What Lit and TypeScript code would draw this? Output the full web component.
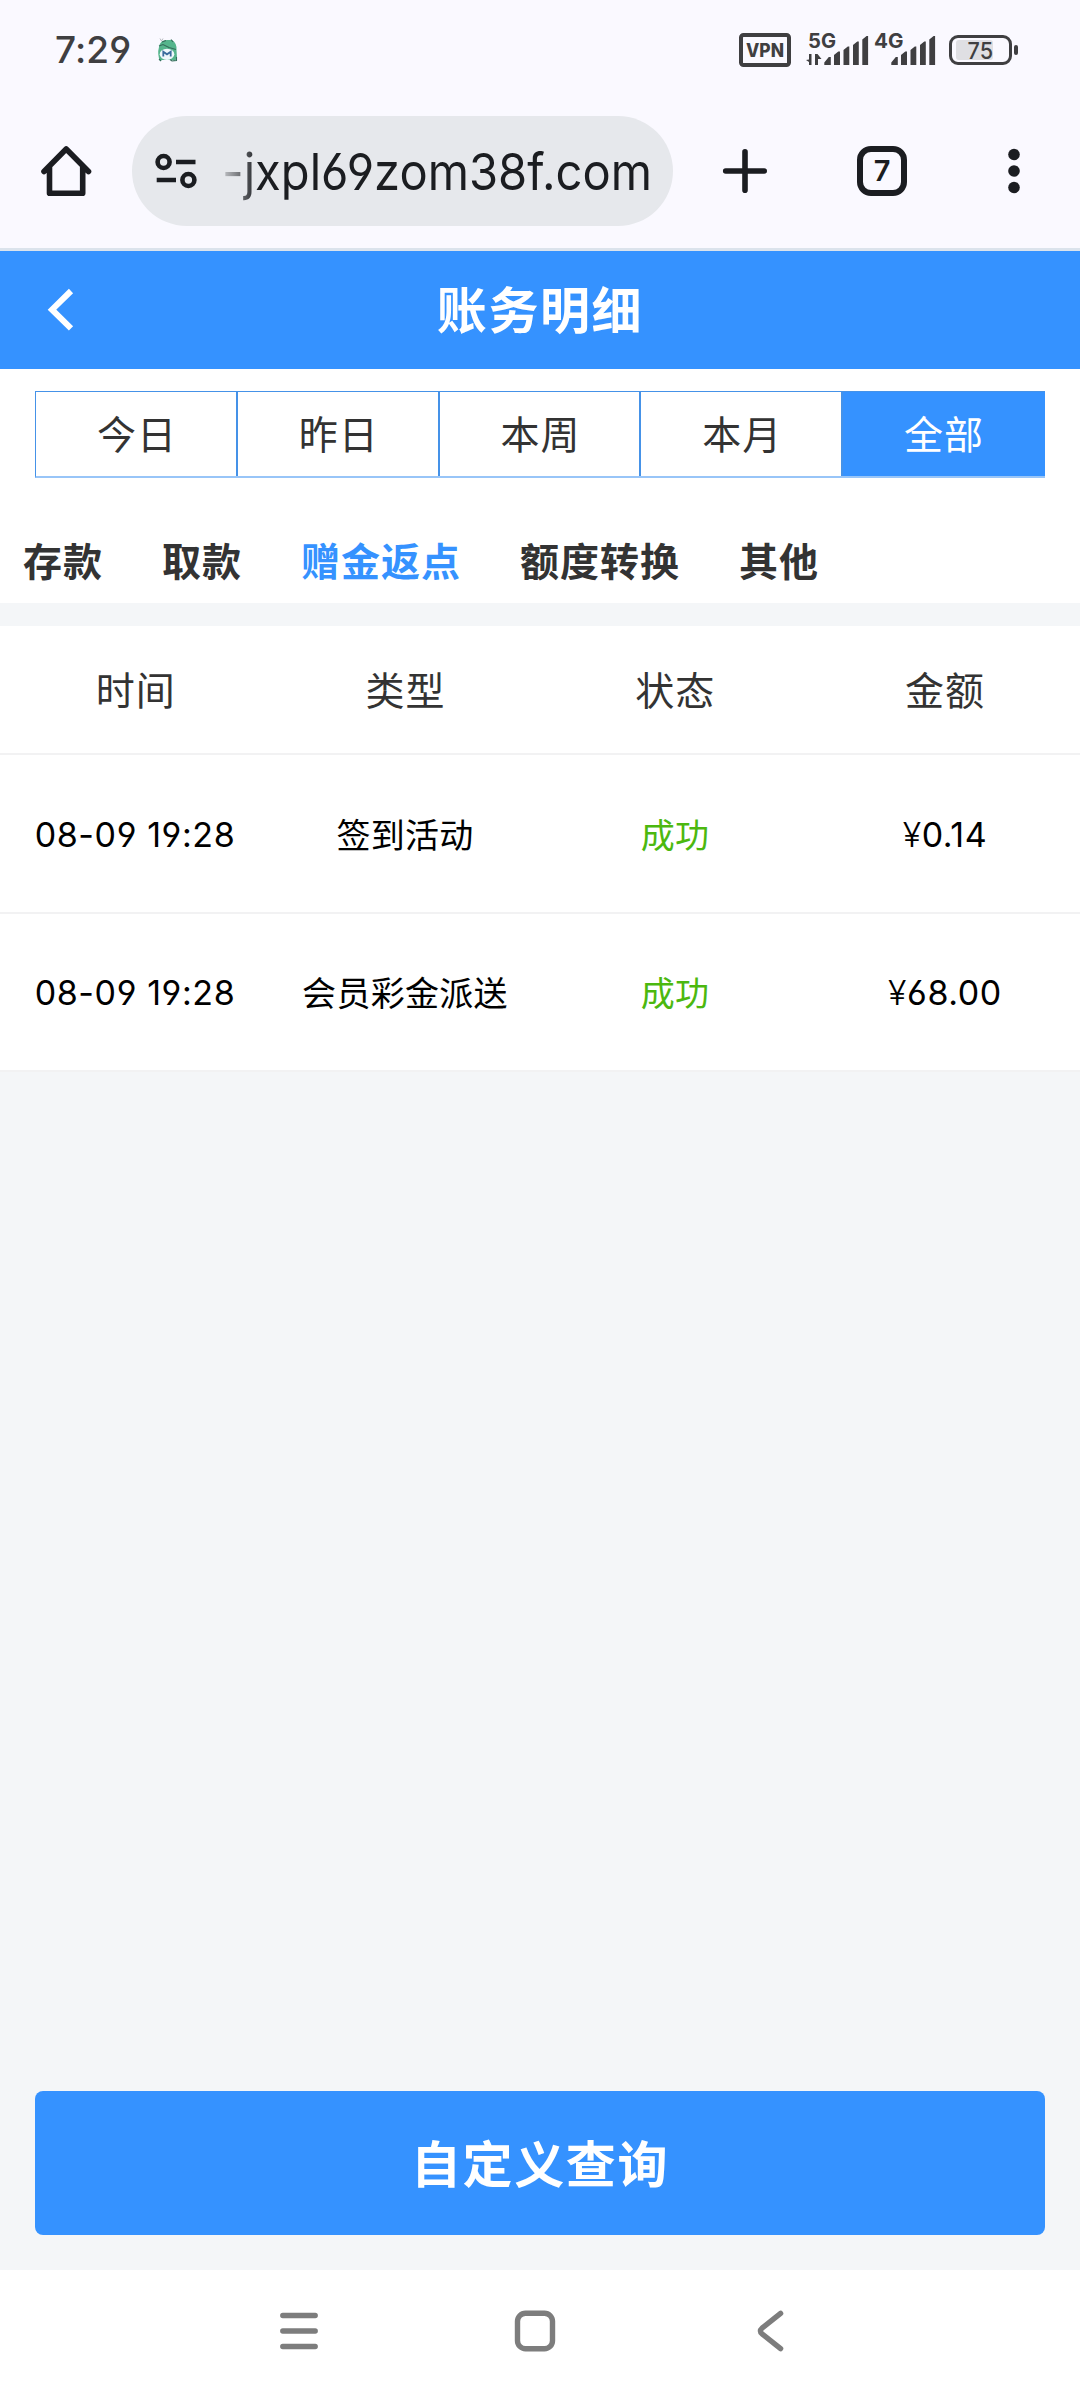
import { LitElement, html, css, svg } from "lit";
import { customElement, property } from "lit/decorators.js";
import { classMap } from "lit/directives/class-map.js";

const signalBars = (x: number) => svg`
  <path transform="translate(${x} 0)" d="M0 65V62.5L4.5 57H6.5V65ZM9.7 65V55L14 51.5H15.7V65ZM19.2 65V50L23.5 46.5H25V65ZM28.7 65V45L33 41.5H34.5V65ZM38 65V39.5L42.3 36H43.8V65Z" fill="#3f3f41"/>`;

@customElement("status-bar")
class StatusBar extends LitElement {
  static styles = css`
    :host { display: flex; height: 100px; align-items: flex-start; justify-content: space-between; padding: 0 60px 0 55px; color: #3f3f41; }
    .left { display: flex; align-items: center; gap: 25px; height: 100px; }
    .time { font: 500 37px/40px Inter, sans-serif; letter-spacing: 0.1px; font-feature-settings: "cv04"; }
    svg { display: block; }
    text { font-family: Inter, sans-serif; fill: #3f3f41; }
    .vpn { font-size: 18.5px; font-weight: 800; }
    .net { font-size: 20px; font-weight: 700; }
    .charge { font-size: 23.5px; font-weight: 500; }
  `;
  render() {
    return html`
      <div class="left">
        <span class="time">7:29</span>
        <svg width="22" height="26" viewBox="156 37 22 26">
          <path d="M159 47Q160 40 167 40H172Q177 43 176.5 50L177 58L175 61L172 60H162L160 61Q157 54 159 47Z" fill="#55b58c"/>
          <path d="M159 46L163 44.5L169 47.5L176 49.5M159 59L161 61M170 59.5L172 61L176.5 60.5V57M162 42L166 40.5M171 39.5L173 42" fill="none" stroke="#356d5b" stroke-width="1.1"/>
          <ellipse cx="167" cy="54.3" rx="7.3" ry="5.6" fill="#eef7fb"/>
          <path d="M163.3 56.5V51.7L167 54.3L170.7 51.7V56.5" fill="none" stroke="#3b6c9d" stroke-width="1.8"/>
          <path d="M160 38.5L161.5 41L163 38.5" fill="none" stroke="#b9bcc0" stroke-width="1"/>
        </svg>
      </div>
      <svg width="282" height="100" viewBox="738 0 282 100">
        <rect x="741" y="35" width="48" height="30" rx="2.5" fill="none" stroke="#3f3f41" stroke-width="4"/>
        <text class="vpn" x="746" y="56.8" textLength="38" lengthAdjust="spacingAndGlyphs">VPN</text>
        <text class="net" x="808" y="48" textLength="28" lengthAdjust="spacingAndGlyphs">5G</text>
        <path d="M811.5 54V65H809V62L806 60L809 59.5V54ZM815 65V54L817.5 54L821.5 59H818V65Z" fill="#3f3f41"/>
        ${signalBars(824.3)}
        <text class="net" x="874" y="48" textLength="29.5" lengthAdjust="spacingAndGlyphs">4G</text>
        ${signalBars(891.3)}
        <rect x="950.5" y="36.5" width="60" height="27" rx="7.5" fill="none" stroke="#3f3f41" stroke-width="3"/>
        <rect x="956" y="40" width="37" height="20" rx="3" fill="#dfdfe3"/>
        <text class="charge" x="967.5" y="59" textLength="25.5" lengthAdjust="spacingAndGlyphs">75</text>
        <rect x="1014" y="45" width="4" height="10" rx="2" fill="#3f3f41"/>
      </svg>`;
  }
}

@customElement("browser-bar")
class BrowserBar extends LitElement {
  static styles = css`
    :host { display: flex; align-items: center; box-sizing: border-box; height: 151px; padding: 0 56px 6px 36px; border-bottom: 3px solid #dbe3ec; color: #1b1d21; }
    svg { display: block; flex: none; overflow: visible; fill: none; stroke: #1b1d21; }
    .pill { display: flex; align-items: center; box-sizing: border-box; width: 541px; height: 110px; margin-left: 36px; padding-left: 20px; border-radius: 55px; background: #e6e8ec; }
    .url { font-family: Inter, sans-serif; font-size: 51px; font-weight: 400; stroke: none; fill: url(#fade); font-feature-settings: "cv03", "cv04"; }
    .plus { margin-left: 44px; }
    .tabs { display: flex; align-items: center; justify-content: center; box-sizing: border-box; width: 50px; height: 50px; margin-left: 84px; border: 6px solid #1b1d21; border-radius: 14px; font: 600 29px/38px Inter, sans-serif; }
    .more { margin-left: 101px; }
  `;
  render() {
    return html`
      <svg width="60" height="60" viewBox="36 141 60 60" stroke-width="5.6" stroke-linecap="round" stroke-linejoin="round">
        <path d="M44 171.5L66.2 149L88.5 171.5M49.5 167V193.2H82.7V167"/>
      </svg>
      <div class="pill">
        <svg width="514" height="110" viewBox="152 116 514 110" stroke-width="4.6">
          <defs>
            <linearGradient id="fade" gradientUnits="userSpaceOnUse" x1="215" y1="0" x2="258" y2="0">
              <stop offset="0" stop-color="#1b1d21" stop-opacity="0"/>
              <stop offset="1" stop-color="#1b1d21"/>
            </linearGradient>
          </defs>
          <circle cx="163.6" cy="162" r="6"/><path d="M176 162H195.5M156.7 180H176"/><circle cx="188.4" cy="180" r="6"/>
          <text class="url" x="222" y="190" textLength="430" lengthAdjust="spacingAndGlyphs">-jxpl69zom38f.com</text>
        </svg>
      </div>
      <svg class="plus" width="56" height="56" viewBox="717 143 56 56" stroke-width="5.6" stroke-linecap="round">
        <path d="M725.7 171H764.2M745 151.8V190.2"/>
      </svg>
      <div class="tabs">7</div>
      <svg class="more" width="12" height="50" viewBox="1008 146 12 50">
        <g fill="#1b1d21" stroke="none"><circle cx="1014" cy="154.5" r="5.8"/><circle cx="1014" cy="171" r="5.8"/><circle cx="1014" cy="187.5" r="5.8"/></g>
      </svg>`;
  }
}

interface Entry { time: string; type: string; status: string; amount: string }

@customElement("ledger-table")
class LedgerTable extends LitElement {
  @property({ attribute: false }) entries: Entry[] = [];
  static styles = css`
    :host { display: block; background: #fff; }
    .row { display: grid; grid-template-columns: repeat(4, 1fr); align-items: center; justify-items: center; box-sizing: border-box; height: 158.5px; padding-top: 1px; border-bottom: 2px solid #f2f2f3; color: #000; font-size: 34px; line-height: 50px; letter-spacing: 0.3px; }
    .head { height: 129px; padding: 0 0 4px 1px; color: #333; font-size: 39px; letter-spacing: 1px; }
    .num { padding-top: 2px; font-family: Inter, sans-serif; font-feature-settings: "cv03", "cv04"; letter-spacing: 0.6px; }
    .yen { font-weight: 300; }
    .ok { color: #4cb80f; }
  `;
  render() {
    return html`
      <div class="row head"><span>时间</span><span>类型</span><span>状态</span><span>金额</span></div>
      ${this.entries.map(e => html`
        <div class="row">
          <span class="num">${e.time}</span><span>${e.type}</span><span class="ok">${e.status}</span>
          <span class="num"><span class="yen">¥</span>${e.amount}</span>
        </div>`)}`;
  }
}

@customElement("app-root")
class AppRoot extends LitElement {
  static styles = css`
    :host { display: flex; flex-direction: column; box-sizing: border-box; width: 1080px; height: 2400px; overflow: hidden; background: #f4f6f8; color: #333; font-family: "Noto Sans CJK SC", sans-serif; }
    .chrome { background: #faf9ff; }
    .header { display: grid; grid-template-columns: 1fr auto 1fr; align-items: center; box-sizing: border-box; height: 118px; padding: 0 44px; background: #3592ff; color: #fff; }
    .title { padding-bottom: 6px; font-size: 50px; font-weight: 700; line-height: 70px; letter-spacing: 1.6px; }
    svg { display: block; }
    .filters { background: #fff; padding: 22px 35px 0; height: 212px; }
    .range { display: flex; box-sizing: border-box; height: 87px; border: 1px solid #4592e8; border-width: 1px 0 2px 1px; border-bottom-color: #98c5f8; }
    .day { flex: 1; display: flex; align-items: center; justify-content: center; box-sizing: border-box; padding: 0 0 4px 2px; border-right: 2px solid #4592e8; font-size: 39px; letter-spacing: 1px; line-height: 56px; }
    .day.on { background: #3592ff; color: #fff; border-right-color: #3592ff; }
    .kinds { display: flex; gap: 59px; margin: 53px 0 0 -12px; font-size: 39px; font-weight: 700; letter-spacing: 1px; line-height: 56px; }
    .kind.on { color: #3592ff; }
    .table { margin-top: 23px; }
    .action { display: flex; align-items: center; justify-content: center; box-sizing: border-box; height: 144px; margin: auto 35px 35px; padding-bottom: 4px; border-radius: 8px; background: #3592ff; color: #fff; font-size: 50px; font-weight: 700; letter-spacing: 1.6px; }
    .nav { display: flex; align-items: center; justify-content: center; gap: 186px; flex: none; box-sizing: border-box; height: 130px; padding: 0 10px 8px 0; background: #fff; }
    .nav svg { fill: none; stroke: #7d7d7d; stroke-width: 5.4; stroke-linecap: round; stroke-linejoin: round; }
  `;
  private ranges = ["今日", "昨日", "本周", "本月", "全部"];
  private kinds = ["存款", "取款", "赠金返点", "额度转换", "其他"];
  private entries: Entry[] = [
    { time: "08-09 19:28", type: "签到活动", status: "成功", amount: "0.14" },
    { time: "08-09 19:28", type: "会员彩金派送", status: "成功", amount: "68.00" },
  ];
  render() {
    return html`
      <div class="chrome"><status-bar></status-bar><browser-bar></browser-bar></div>
      <div class="header">
        <svg width="34" height="50" viewBox="44 285 34 50" fill="none" stroke="#fff" stroke-width="6"><path d="M71 291L52 309.7L71 328.3"/></svg>
        <span class="title">账务明细</span>
      </div>
      <div class="filters">
        <div class="range">${this.ranges.map(r => html`<div class=${classMap({ day: true, on: r === "全部" })}>${r}</div>`)}</div>
        <div class="kinds">${this.kinds.map(k => html`<span class=${classMap({ kind: true, on: k === "赠金返点" })}>${k}</span>`)}</div>
      </div>
      <ledger-table class="table" .entries=${this.entries}></ledger-table>
      <div class="action">自定义查询</div>
      <div class="nav">
        <svg width="50" height="50" viewBox="0 0 50 50"><path d="M8.8 9.5H41.2M8.8 25H41.2M8.8 40.5H41.2"/></svg>
        <svg width="50" height="50" viewBox="0 0 50 50"><rect x="7.5" y="7.2" width="35" height="35.6" rx="8"/></svg>
        <svg width="50" height="50" viewBox="1 0 50 50"><path d="M35.6 7.4L17 22.2Q13.8 25 17 27.8L35.6 42.6"/></svg>
      </div>`;
  }
}
